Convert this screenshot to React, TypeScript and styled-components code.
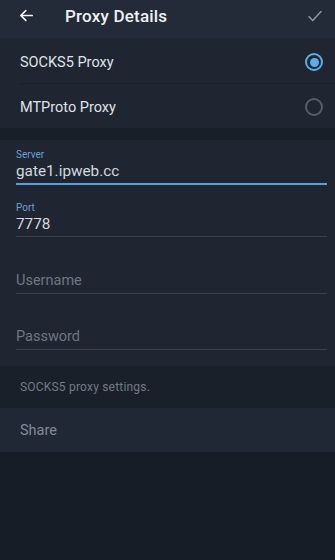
import React from "react";
import styled, { createGlobalStyle } from "styled-components";

const Global = createGlobalStyle`
  html, body { margin: 0; padding: 0; background: #161d26; }
  body { font-family: Roboto, "Noto Sans", "Liberation Sans", sans-serif; }
  * { box-sizing: border-box; }
`;

const Page = styled.div`
  width: 335px;
  height: 560px;
  background: #161d26;
  display: flex;
  flex-direction: column;
  overflow: hidden;
`;

const Header = styled.div`
  height: 38px;
  background: #232b38;
  display: flex;
  align-items: center;
  padding: 0 10px 7px 16px;
`;

const IconButton = styled.div`
  width: 20px;
  height: 20px;
  display: flex;
  align-items: center;
  justify-content: center;
`;

const Title = styled.div`
  flex: 1;
  margin-left: 29px;
  color: #eef0f3;
  font-size: 17px;
  font-weight: 500;
  letter-spacing: 0.2px;
`;

const Section = styled.div<{ $bg: string }>`
  background: ${(p) => p.$bg};
`;

const RadioRow = styled.div<{ $divider?: boolean; $h: number }>`
  height: ${(p) => p.$h}px;
  display: flex;
  align-items: center;
  justify-content: space-between;
  padding: 2px 12px 0 20px;
  position: relative;
  ${(p) =>
    p.$divider
      ? `&::after { content: ""; position: absolute; left: 20px; right: 0; bottom: 0; height: 1px; background: #19202a; }`
      : ""}
`;

const RowLabel = styled.span`
  color: #dfe2e7;
  font-size: 14.5px;
`;

const Radio = styled.div<{ $on?: boolean }>`
  width: 18px;
  height: 18px;
  border-radius: 50%;
  border: 2px solid ${(p) => (p.$on ? "#5aaee8" : "#555d68")};
  display: flex;
  align-items: center;
  justify-content: center;
  &::after {
    content: "";
    width: 9px;
    height: 9px;
    border-radius: 50%;
    background: ${(p) => (p.$on ? "#5aaee8" : "transparent")};
  }
`;

const Gap = styled.div`
  height: 12px;
  background: #181f29;
`;

const Fields = styled.div`
  background: #1f2632;
  padding: 6px 8px 0 16px;
  height: 226px;
`;

const Field = styled.div<{ $focused?: boolean; $h: number }>`
  height: ${(p) => p.$h}px;
  display: flex;
  flex-direction: column;
  justify-content: flex-end;
  border-bottom: ${(p) => (p.$focused ? "2px solid #5b9fd8" : "1px solid #3a424e")};
`;

const FieldLabel = styled.div`
  color: #6d9fd6;
  font-size: 10px;
  line-height: 12px;
`;

const FieldValue = styled.div<{ $placeholder?: boolean }>`
  color: ${(p) => (p.$placeholder ? "#6e7681" : "#d5d8dd")};
  font-size: ${(p) => (p.$placeholder ? "14.5px" : "15.3px")};
  line-height: 20px;
  padding-bottom: 2px;
`;

const Spacer = styled.div<{ $h: number }>`
  height: ${(p) => p.$h}px;
`;

const InfoSection = styled.div`
  height: 42px;
  background: #19202a;
  display: flex;
  align-items: center;
  padding-left: 20px;
  color: #727a85;
  font-size: 12px;
  letter-spacing: 0.2px;
`;

const ShareRow = styled.div`
  height: 44px;
  background: #212835;
  display: flex;
  align-items: center;
  padding-left: 20px;
  color: #828a95;
  font-size: 14.5px;
`;

export default function App() {
  return (
    <Page>
      <Global />
      <Header>
        <IconButton>
          <svg width="17" height="17" viewBox="0 0 24 24" fill="none" stroke="#f2f4f7" strokeWidth="2.4" strokeLinecap="round" strokeLinejoin="round">
            <path d="M20 12H4M11 5l-7 7 7 7" />
          </svg>
        </IconButton>
        <Title>Proxy Details</Title>
        <IconButton>
          <svg width="18" height="18" viewBox="0 0 24 24" fill="none" stroke="#8c929b" strokeWidth="2.2" strokeLinecap="round" strokeLinejoin="round">
            <path d="M4 13l5 5L20 6" />
          </svg>
        </IconButton>
      </Header>
      <Section $bg="#1f2632">
        <RadioRow $divider $h={46}>
          <RowLabel>SOCKS5 Proxy</RowLabel>
          <Radio $on />
        </RadioRow>
        <RadioRow $h={44}>
          <RowLabel>MTProto Proxy</RowLabel>
          <Radio />
        </RadioRow>
      </Section>
      <Gap />
      <Fields>
        <Field $focused $h={39}>
          <FieldLabel>Server</FieldLabel>
          <FieldValue>gate1.ipweb.cc</FieldValue>
        </Field>
        <Spacer $h={11} />
        <Field $h={41}>
          <FieldLabel>Port</FieldLabel>
          <FieldValue>7778</FieldValue>
        </Field>
        <Spacer $h={26} />
        <Field $h={31}>
          <FieldValue $placeholder>Username</FieldValue>
        </Field>
        <Spacer $h={25} />
        <Field $h={31}>
          <FieldValue $placeholder>Password</FieldValue>
        </Field>
      </Fields>
      <InfoSection>SOCKS5 proxy settings.</InfoSection>
      <ShareRow>Share</ShareRow>
    </Page>
  );
}
